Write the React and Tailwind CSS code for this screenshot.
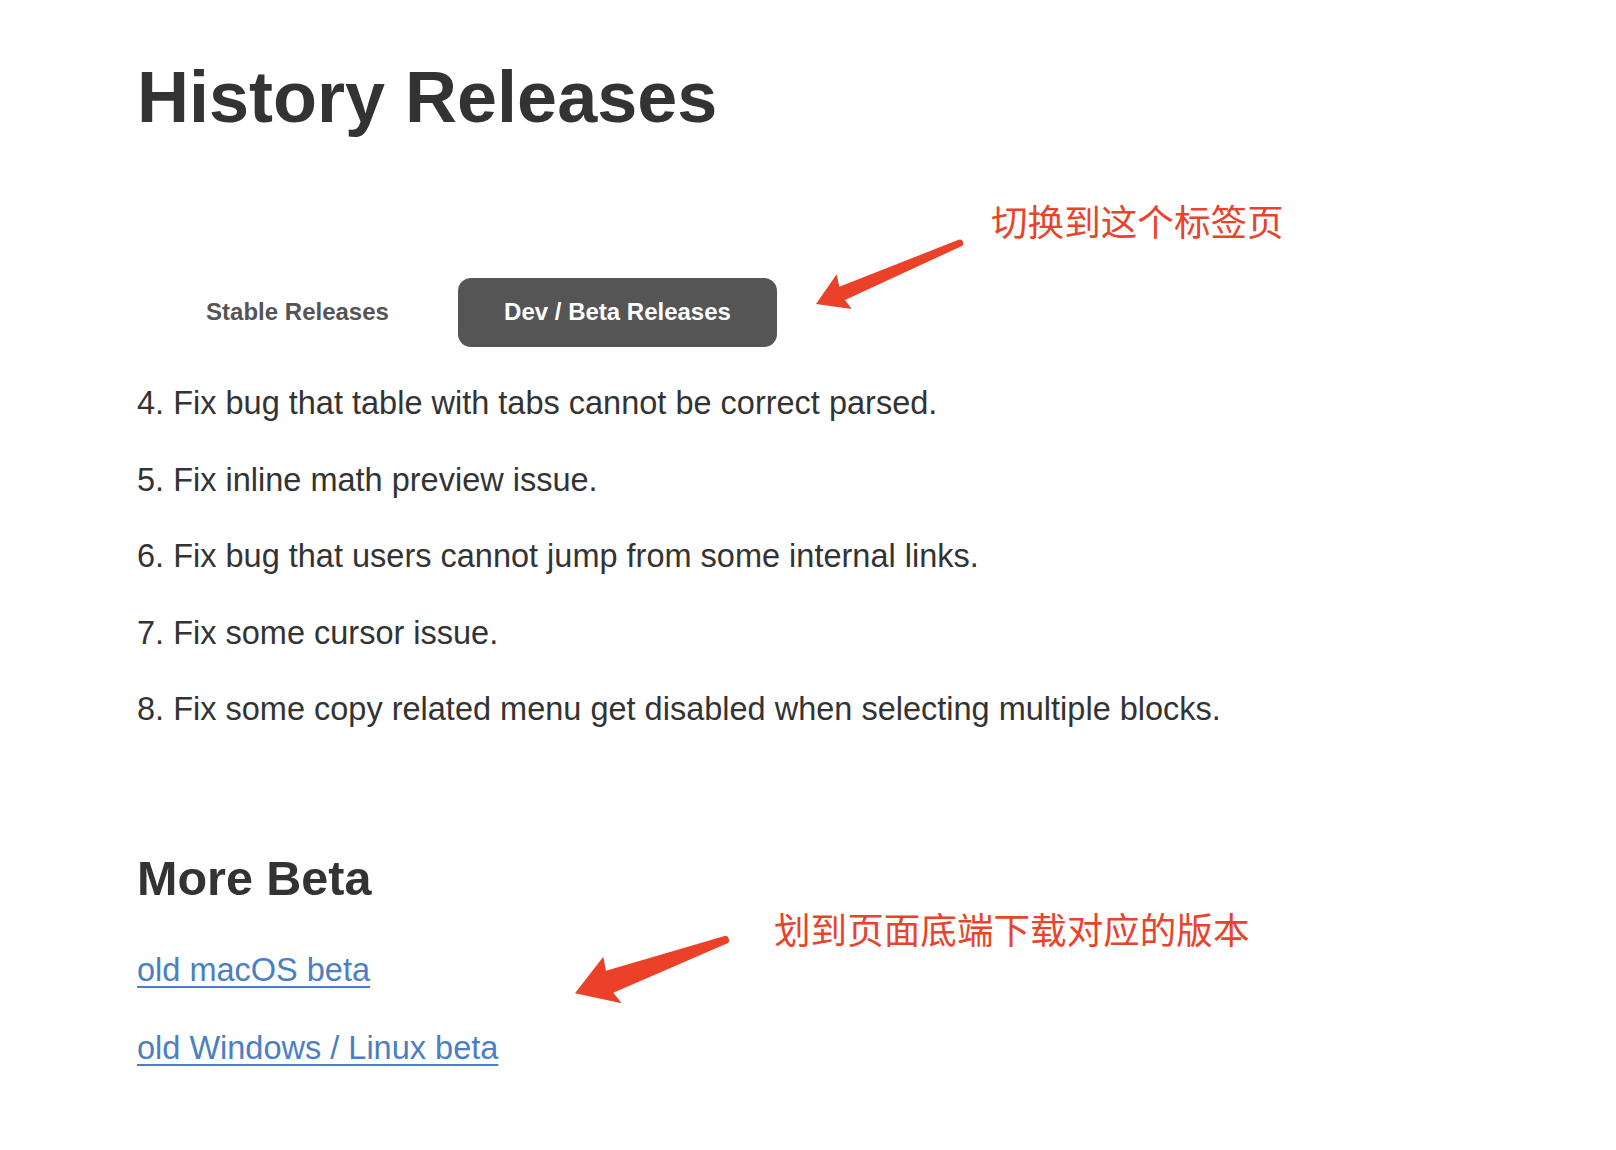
export default function App() {
  const items = [
    "4. Fix bug that table with tabs cannot be correct parsed.",
    "5. Fix inline math preview issue.",
    "6. Fix bug that users cannot jump from some internal links.",
    "7. Fix some cursor issue.",
    "8. Fix some copy related menu get disabled when selecting multiple blocks.",
  ];
  return (
    <div className="relative min-h-screen w-full overflow-hidden bg-white font-['Liberation_Sans',Arial,sans-serif] text-[#333]">
      <div className="pl-[137px] pt-[57px]">
        <h1 className="text-[72px] leading-[80px] font-bold">History Releases</h1>
        <div className="mt-[141px] ml-[24px] flex gap-[24px]">
          <div className="w-[273px] h-[69px] leading-[68px] text-center text-[24px] font-bold text-[#555]">
            Stable Releases
          </div>
          <div className="w-[319px] h-[69px] leading-[68px] text-center text-[24px] font-bold text-white bg-[#555] rounded-[13px]">
            Dev / Beta Releases
          </div>
        </div>
        <div className="mt-[33px]">
          {items.map((t) => (
            <p key={t} className="text-[32.5px] leading-[46px] mb-[30.5px]">
              {t}
            </p>
          ))}
        </div>
        <h2 className="mt-[120px] text-[48.5px] leading-[52px] font-bold">More Beta</h2>
        <p className="mt-[43px] text-[32.5px] leading-[46px]">
          <a className="text-[#4a80c3] underline decoration-[2px] underline-offset-[5px]">old macOS beta</a>
        </p>
        <p className="mt-[32px] text-[32.5px] leading-[46px]">
          <a className="text-[#4a80c3] underline decoration-[2px] underline-offset-[5px]">old Windows / Linux beta</a>
        </p>
      </div>

      <div className="absolute left-[991px] top-[203px] whitespace-nowrap text-[36.6px] leading-[36px] text-[#e9432b] font-['Noto_Sans_CJK_SC',sans-serif]">
        切换到这个标签页
      </div>
      <div className="absolute left-[774px] top-[911px] whitespace-nowrap text-[36.6px] leading-[36px] text-[#e9432b] font-['Noto_Sans_CJK_SC',sans-serif]">
        划到页面底端下载对应的版本
      </div>

      <svg
        className="absolute left-0 top-0 pointer-events-none"
        width="1616"
        height="1150"
        viewBox="0 0 1616 1150"
      >
        <path
          d="M 958.6 239.8 L 839.3 286.7 L 836.7 274.3 L 816 304 L 851.7 309 L 845 300 L 961.4 246.2 A 3.5 3.5 0 0 0 958.6 239.8 Z"
          fill="#ea4128"
        />
        <path
          d="M 723.7 936.2 L 606 970.7 L 603.3 956.7 L 575 993.3 L 621.7 1003.3 L 613.3 992.7 L 726.3 943.8 A 4 4 0 0 0 723.7 936.2 Z"
          fill="#ea4128"
        />
      </svg>
    </div>
  );
}
